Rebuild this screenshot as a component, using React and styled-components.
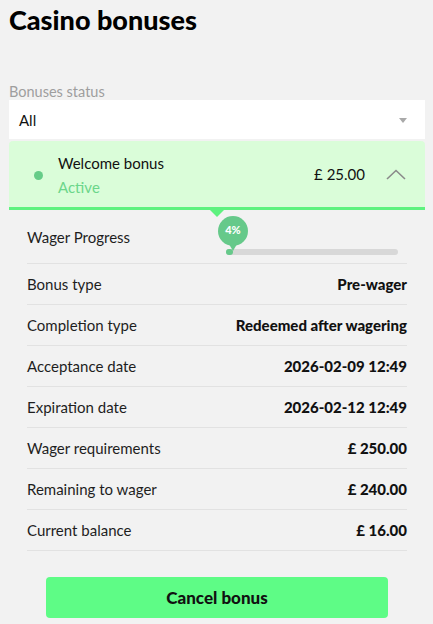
import React from "react";
import styled, { createGlobalStyle } from "styled-components";

const Global = createGlobalStyle`
  html, body { margin: 0; padding: 0; background: #f2f2f2; }
  body { font-family: Lato, "Noto Sans", Arial, sans-serif; color: #1a1a1a; }
  * { box-sizing: border-box; }
`;

const Page = styled.div`
  padding: 0 8px 7px 9px;
  width: 433px;
  overflow: hidden;
`;

const Title = styled.h1`
  margin: 0;
  padding-top: 4px;
  font-size: 27px;
  line-height: 32px;
  font-weight: 900;
  color: #000;
`;

const FieldLabel = styled.div`
  margin-top: 47px;
  font-size: 14.5px;
  line-height: 17px;
  color: #9e9e9e;
`;

const Select = styled.div`
  height: 39px;
  background: #fff;
  display: flex;
  align-items: center;
  justify-content: space-between;
  padding: 0 18px 0 10px;
  font-size: 15px;
  color: #111;
`;

const Caret = styled.span`
  width: 0;
  height: 0;
  border-left: 4px solid transparent;
  border-right: 4px solid transparent;
  border-top: 5px solid #a9a9a9;
  margin-top: 2px;
`;

const Card = styled.div`
  margin-top: 2px;
`;

const CardHeader = styled.div`
  height: 69px;
  background: #dafdd9;
  border-bottom: 3px solid #5ef27f;
  border-radius: 4px 4px 0 0;
  display: grid;
  grid-template-columns: 49px 1fr auto 60px;
  align-items: center;
  position: relative;
`;

const Dot = styled.span`
  justify-self: end;
  margin-right: 15px;
  margin-top: 2px;
  width: 9px;
  height: 9px;
  border-radius: 50%;
  background: #66cc88;
`;

const HeadText = styled.div`
  display: flex;
  flex-direction: column;
  gap: 6px;
  padding-top: 2px;
`;

const BonusName = styled.span`
  font-size: 15px;
  line-height: 18px;
  color: #111;
`;

const Status = styled.span`
  font-size: 15px;
  line-height: 18px;
  color: #6bd68a;
`;

const Amount = styled.span`
  font-size: 15px;
  color: #111;
`;

const ChevronBox = styled.span`
  display: flex;
  justify-content: center;
  padding-left: 2px;
`;

const Pointer = styled.span`
  position: absolute;
  left: 50%;
  bottom: -10px;
  transform: translateX(-50%);
  width: 0;
  height: 0;
  border-left: 7px solid transparent;
  border-right: 7px solid transparent;
  border-top: 7px solid #5ef27f;
`;

const Details = styled.div`
  padding: 0 18px;
`;

const Row = styled.div`
  display: flex;
  align-items: center;
  justify-content: space-between;
  height: ${(p) => p.$h || 41}px;
  border-bottom: 1px solid #e2e2e2;
  font-size: 15px;
`;

const Label = styled.span`
  color: #1e1e1e;
`;

const Value = styled.span`
  font-weight: 900;
  color: #111;
`;

const ProgressCol = styled.div`
  width: 50%;
  align-self: stretch;
  padding: 0 9px 8px;
  display: flex;
  flex-direction: column;
  justify-content: flex-end;
`;

const Track = styled.div`
  position: relative;
  height: 6px;
  border-radius: 3px;
  background: #d8d8d8;
`;

const Fill = styled.div`
  height: 6px;
  min-width: 6px;
  border-radius: 3px;
  background: #66c98a;
`;

const Bubble = styled.div`
  position: absolute;
  bottom: 9px;
  transform: translateX(-50%);
  width: 30px;
  height: 30px;
  border-radius: 50%;
  background: #66c98a;
  color: #fff;
  font-size: 11px;
  font-weight: 900;
  display: flex;
  align-items: center;
  justify-content: center;
  padding-bottom: 4px;
  &::after {
    content: "";
    position: absolute;
    left: 50%;
    bottom: -5px;
    transform: translateX(-50%);
    border-left: 4px solid transparent;
    border-right: 4px solid transparent;
    border-top: 7px solid #66c98a;
  }
`;

const ButtonWrap = styled.div`
  display: flex;
  justify-content: center;
  padding-top: 26px;
`;

const Button = styled.button`
  width: 342px;
  height: 41px;
  border: none;
  border-radius: 4px;
  background: #5efc86;
  font-family: inherit;
  font-size: 17px;
  font-weight: 900;
  color: #111;
`;

const rows = [
  ["Bonus type", "Pre-wager"],
  ["Completion type", "Redeemed after wagering"],
  ["Acceptance date", "2026-02-09 12:49"],
  ["Expiration date", "2026-02-12 12:49"],
  ["Wager requirements", "£ 250.00"],
  ["Remaining to wager", "£ 240.00"],
  ["Current balance", "£ 16.00"],
];

export default function App() {
  const pct = 4;
  return (
    <Page>
      <Global />
      <Title>Casino bonuses</Title>
      <FieldLabel>Bonuses status</FieldLabel>
      <Select>
        All
        <Caret />
      </Select>
      <Card>
        <CardHeader>
          <Dot />
          <HeadText>
            <BonusName>Welcome bonus</BonusName>
            <Status>Active</Status>
          </HeadText>
          <Amount>£ 25.00</Amount>
          <ChevronBox>
            <svg width="20" height="11" viewBox="0 0 20 11">
              <path d="M1 10 L10 1.5 L19 10" fill="none" stroke="#8a8a8a" strokeWidth="1.6" />
            </svg>
          </ChevronBox>
          <Pointer />
        </CardHeader>
        <Details>
          <Row $h={54}>
            <Label>Wager Progress</Label>
            <ProgressCol>
              <Track>
                <Fill style={{ width: `${pct}%` }} />
                <Bubble style={{ left: `${pct}%` }}>{pct}%</Bubble>
              </Track>
            </ProgressCol>
          </Row>
          {rows.map(([l, v]) => (
            <Row key={l}>
              <Label>{l}</Label>
              <Value>{v}</Value>
            </Row>
          ))}
          <ButtonWrap>
            <Button>Cancel bonus</Button>
          </ButtonWrap>
        </Details>
      </Card>
    </Page>
  );
}
